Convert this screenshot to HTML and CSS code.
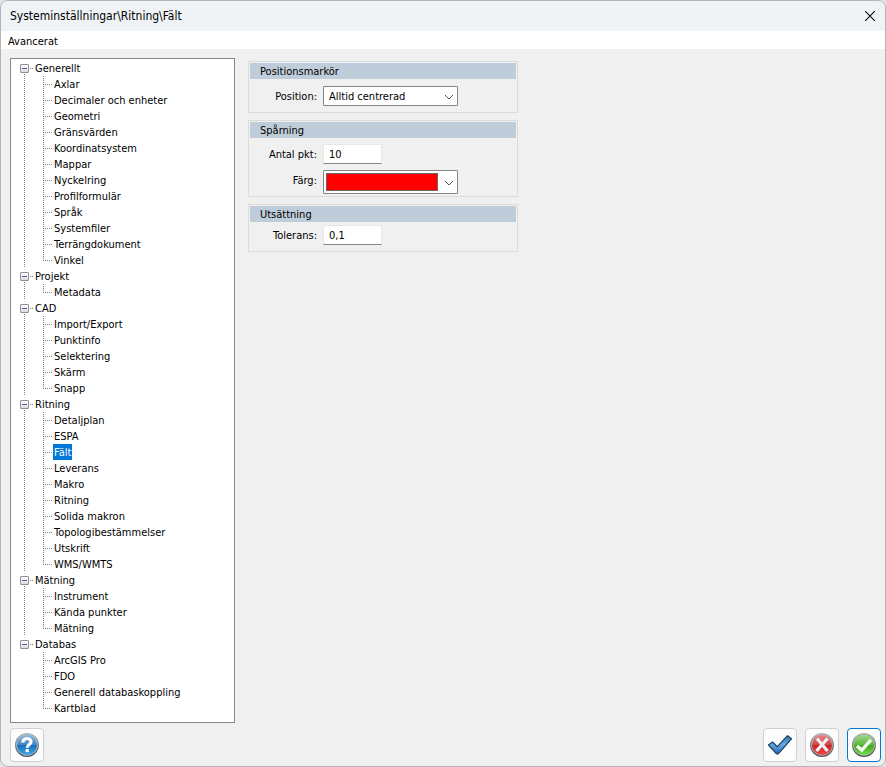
FILE: index.html
```
<!DOCTYPE html>
<html lang="sv">
<head>
<meta charset="utf-8">
<title>Systeminställningar</title>
<link rel="stylesheet" href="styles.css">
</head>
<body>
<div class="window">
  <header class="titlebar">
    <h1 class="title">Systeminställningar\Ritning\Fält</h1>
    <button class="close" type="button" aria-label="Stäng">
      <svg width="10" height="10" viewBox="0 0 10 10"><path d="M0 0L10 10M10 0L0 10" stroke="#111" stroke-width="1.2"/></svg>
    </button>
  </header>
  <nav class="menubar"><button class="menu" type="button">Avancerat</button></nav>

  <main class="content">
    <nav class="tree">
      <ul class="roots">
        <li class="root"><div class="row"><button class="toggle" type="button" aria-label="Fäll ihop"></button><a class="node" href="#">Generellt</a></div>
          <ul class="children">
            <li><a class="node" href="#">Axlar</a></li>
            <li><a class="node" href="#">Decimaler och enheter</a></li>
            <li><a class="node" href="#">Geometri</a></li>
            <li><a class="node" href="#">Gränsvärden</a></li>
            <li><a class="node" href="#">Koordinatsystem</a></li>
            <li><a class="node" href="#">Mappar</a></li>
            <li><a class="node" href="#">Nyckelring</a></li>
            <li><a class="node" href="#">Profilformulär</a></li>
            <li><a class="node" href="#">Språk</a></li>
            <li><a class="node" href="#">Systemfiler</a></li>
            <li><a class="node" href="#">Terrängdokument</a></li>
            <li><a class="node" href="#">Vinkel</a></li>
          </ul></li>
        <li class="root"><div class="row"><button class="toggle" type="button" aria-label="Fäll ihop"></button><a class="node" href="#">Projekt</a></div>
          <ul class="children">
            <li><a class="node" href="#">Metadata</a></li>
          </ul></li>
        <li class="root"><div class="row"><button class="toggle" type="button" aria-label="Fäll ihop"></button><a class="node" href="#">CAD</a></div>
          <ul class="children">
            <li><a class="node" href="#">Import/Export</a></li>
            <li><a class="node" href="#">Punktinfo</a></li>
            <li><a class="node" href="#">Selektering</a></li>
            <li><a class="node" href="#">Skärm</a></li>
            <li><a class="node" href="#">Snapp</a></li>
          </ul></li>
        <li class="root"><div class="row"><button class="toggle" type="button" aria-label="Fäll ihop"></button><a class="node" href="#">Ritning</a></div>
          <ul class="children">
            <li><a class="node" href="#">Detaljplan</a></li>
            <li><a class="node" href="#">ESPA</a></li>
            <li><a class="node selected" href="#" aria-current="page">Fält</a></li>
            <li><a class="node" href="#">Leverans</a></li>
            <li><a class="node" href="#">Makro</a></li>
            <li><a class="node" href="#">Ritning</a></li>
            <li><a class="node" href="#">Solida makron</a></li>
            <li><a class="node" href="#">Topologibestämmelser</a></li>
            <li><a class="node" href="#">Utskrift</a></li>
            <li><a class="node" href="#">WMS/WMTS</a></li>
          </ul></li>
        <li class="root"><div class="row"><button class="toggle" type="button" aria-label="Fäll ihop"></button><a class="node" href="#">Mätning</a></div>
          <ul class="children">
            <li><a class="node" href="#">Instrument</a></li>
            <li><a class="node" href="#">Kända punkter</a></li>
            <li><a class="node" href="#">Mätning</a></li>
          </ul></li>
        <li class="root"><div class="row"><button class="toggle" type="button" aria-label="Fäll ihop"></button><a class="node" href="#">Databas</a></div>
          <ul class="children">
            <li><a class="node" href="#">ArcGIS Pro</a></li>
            <li><a class="node" href="#">FDO</a></li>
            <li><a class="node" href="#">Generell databaskoppling</a></li>
            <li><a class="node" href="#">Kartblad</a></li>
          </ul></li>
      </ul>
    </nav>

    <form class="panels">
      <section class="group">
        <h2 class="group-title">Positionsmarkör</h2>
        <div class="fields">
          <label class="label" for="position">Position:</label>
          <span class="combo">
            <select class="select" id="position"><option>Alltid centrerad</option></select>
            <svg class="chevron" width="10" height="6" viewBox="0 0 10 6"><path d="M1 1L5 5L9 1" fill="none" stroke="#555"/></svg>
          </span>
        </div>
      </section>
      <section class="group">
        <h2 class="group-title">Spårning</h2>
        <div class="fields tracking">
          <label class="label" for="points">Antal pkt:</label>
          <input class="input" id="points" type="text" value="10">
          <label class="label" for="color">Färg:</label>
          <span class="combo">
            <select class="select color" id="color"><option value="#ff0000"></option></select>
            <svg class="chevron" width="10" height="6" viewBox="0 0 10 6"><path d="M1 1L5 5L9 1" fill="none" stroke="#555"/></svg>
          </span>
        </div>
      </section>
      <section class="group">
        <h2 class="group-title">Utsättning</h2>
        <div class="fields compact">
          <label class="label" for="tolerance">Tolerans:</label>
          <input class="input" id="tolerance" type="text" value="0,1">
        </div>
      </section>
    </form>
  </main>

  <footer class="actions">
    <button class="action help" type="button" aria-label="Hjälp">
      <svg width="26" height="26" viewBox="0 0 26 26">
        <defs>
          <linearGradient id="rim" x1="0" y1="0" x2="0" y2="1"><stop offset="0" stop-color="#aeb4b8"/><stop offset="1" stop-color="#4c5155"/></linearGradient>
          <linearGradient id="blue" x1="0" y1="0" x2="0" y2="1"><stop offset="0" stop-color="#8cb8dc"/><stop offset=".48" stop-color="#3f88c4"/><stop offset=".52" stop-color="#1e6fb6"/><stop offset="1" stop-color="#3ba4ea"/></linearGradient>
        </defs>
        <circle cx="13" cy="13" r="12" fill="url(#rim)"/><circle cx="13" cy="13" r="10.7" fill="#a9c4d8"/><circle cx="13" cy="13" r="10" fill="url(#blue)"/>
        <path d="M8.8 10.6C8.8 5.2 17 5.4 17 9.8C17 12.6 13.2 12.6 13.2 15.8" fill="none" stroke="#fff" stroke-width="3.2"/><rect x="11.5" y="17" width="3.4" height="3.2" rx="1" fill="#fff"/>
      </svg>
    </button>
    <button class="action" type="button" aria-label="Verkställ">
      <svg width="26" height="26" viewBox="0 0 26 26">
        <defs><linearGradient id="tick" x1="0" y1="0" x2="0" y2="1"><stop offset="0" stop-color="#3274b4"/><stop offset=".5" stop-color="#64a9de"/><stop offset="1" stop-color="#236bb0"/></linearGradient></defs>
        <path d="M1.5 13L5.5 10L10.3 14.7L20.5 3.7L24.5 6.8L11.3 21.8H9.5Z" fill="url(#tick)" stroke="#173f66" stroke-width="1.2" stroke-linejoin="round"/>
      </svg>
    </button>
    <button class="action" type="button" aria-label="Avbryt">
      <svg width="26" height="26" viewBox="0 0 26 26">
        <defs><linearGradient id="red" x1="0" y1="0" x2="0" y2="1"><stop offset="0" stop-color="#e18a8a"/><stop offset=".48" stop-color="#cf4848"/><stop offset=".52" stop-color="#c32828"/><stop offset="1" stop-color="#e84a48"/></linearGradient></defs>
        <circle cx="13" cy="13" r="12" fill="url(#rim)"/><circle cx="13" cy="13" r="10.7" fill="#c9a9a9"/><circle cx="13" cy="13" r="10" fill="url(#red)"/>
        <path d="M8 6.5L18.5 19M18.5 6.5L7.5 19" stroke="#f4eeee" stroke-width="3.2"/>
      </svg>
    </button>
    <button class="action default" type="button" aria-label="OK">
      <svg width="26" height="26" viewBox="0 0 26 26">
        <defs><linearGradient id="green" x1="0" y1="0" x2="0" y2="1"><stop offset="0" stop-color="#9fd888"/><stop offset=".48" stop-color="#5dbb3c"/><stop offset=".52" stop-color="#42a820"/><stop offset="1" stop-color="#70dc48"/></linearGradient></defs>
        <circle cx="13" cy="13" r="12" fill="url(#rim)"/><circle cx="13" cy="13" r="10.7" fill="#a8c6a0"/><circle cx="13" cy="13" r="10" fill="url(#green)"/>
        <path d="M6 14L10.8 18.2L20 7.8" fill="none" stroke="#f4f8f2" stroke-width="3.4"/>
      </svg>
    </button>
  </footer>
</div>
</body>
</html>
```
FILE: styles.css
```
* {
  box-sizing: border-box;
}

body {
  margin: 0;
  background: #e4e4e4;
  color: #000;
  font: 11px/16px Tahoma, "DejaVu Sans Condensed", "DejaVu Sans", sans-serif;
}

button,
input,
select {
  font: inherit;
  color: inherit;
  border-radius: 0;
}

h1,
h2,
ul {
  margin: 0;
  padding: 0;
  font: inherit;
  list-style: none;
}

svg {
  display: block;
}

.window {
  display: flex;
  flex-direction: column;
  min-height: 100vh;
  border: 1px solid #b4b4b4;
  border-radius: 8px;
  overflow: hidden;
  background: #f0f0f0;
}

.titlebar {
  display: flex;
  align-items: center;
  justify-content: space-between;
  height: 30px;
  padding: 0 10px 0 9px;
  background: #eff3f6;
}

.title {
  font-size: 12px;
  line-height: 18px;
}

.close {
  padding: 0;
  border: 0;
  background: none;
}

.menubar {
  display: flex;
  height: 18px;
  padding: 0 7px;
  background: #fff;
}

.menu {
  padding: 2px 0 0;
  border: 0;
  background: none;
  line-height: 18px;
}

.content {
  display: flex;
  flex: 1;
  gap: 13px;
  padding: 9px 9px 0;
}

.tree {
  flex: none;
  width: 225px;
  padding: 1px 0 6px;
  border: 1px solid #828790;
  background: #fff;
}

.root {
  padding-left: 9px;
  background: repeating-linear-gradient(#808080 0 1px, transparent 1px 2px) 13px 8px / 1px 100% no-repeat;
}

.root:last-child {
  background: none;
}

.row {
  display: flex;
  align-items: center;
  height: 16px;
  background: repeating-linear-gradient(90deg, #808080 0 1px, transparent 1px 2px) 10px 8px / 4px 1px no-repeat;
}

.toggle {
  width: 9px;
  height: 9px;
  margin-right: 5px;
  padding: 0;
  border: 1px solid #919191;
  border-radius: 1px;
  background: linear-gradient(#4b63a7, #4b63a7) center / 5px 1px no-repeat, linear-gradient(#fff, #dcdcdc);
}

.children {
  padding-left: 23px;
}

.children li {
  display: flex;
  height: 16px;
  padding-left: 10px;
  background:
    repeating-linear-gradient(#808080 0 1px, transparent 1px 2px) 0 0 / 1px 16px no-repeat,
    repeating-linear-gradient(90deg, #808080 0 1px, transparent 1px 2px) 0 8px / 9px 1px no-repeat;
}

.children li:last-child {
  background-size: 1px 9px, 9px 1px;
}

.node {
  height: 16px;
  padding: 0 1px;
  color: #000;
  line-height: 18px;
  text-decoration: none;
  white-space: nowrap;
}

.node.selected {
  background: #0078d7;
  color: #fff;
}

.panels {
  display: flex;
  flex-direction: column;
  gap: 7px;
  flex: 0 1 270px;
  padding-top: 3px;
}

.group {
  padding: 1px;
  border: 1px solid #dcdcdc;
}

.group-title {
  height: 16px;
  padding-left: 10px;
  background: #bfcddb;
  line-height: 18px;
}

.fields {
  display: grid;
  grid-template-columns: 67px 1fr;
  gap: 6px;
  align-items: start;
  padding: 7px 0 5px;
}

.fields.tracking {
  padding: 6px 0 1px;
}

.fields.compact {
  padding: 3px 0 5px;
}

.label {
  padding-top: 2px;
  line-height: 18px;
  text-align: right;
  white-space: nowrap;
}

.combo {
  display: flex;
  position: relative;
  width: 135px;
}

.select {
  appearance: none;
  width: 100%;
  height: 20px;
  padding: 1px 20px 0 5px;
  border: 1px solid #858585;
  border-radius: 1px;
  background: #fff;
}

.select.color {
  height: 24px;
  background:
    linear-gradient(#f00, #f00) 3px 3px / 110px 16px no-repeat,
    linear-gradient(#666, #666) 2px 2px / 112px 18px no-repeat,
    #fff;
}

.chevron {
  position: absolute;
  top: 50%;
  right: 4px;
  margin-top: -2px;
  pointer-events: none;
}

.input {
  width: 59px;
  height: 20px;
  padding: 0 5px;
  border: 1px solid #e8e8e8;
  border-bottom-color: #868686;
  background: #fff;
}

.actions {
  display: flex;
  gap: 8px;
  padding: 5px 4px 4px 9px;
}

.action {
  display: flex;
  align-items: center;
  justify-content: center;
  width: 34px;
  height: 34px;
  padding: 0;
  border: 1px solid #d0d0d0;
  border-radius: 4px;
  background: #fdfdfd;
}

.action.help {
  margin-right: auto;
}

.action.default {
  border-color: #0078d4;
}
```
